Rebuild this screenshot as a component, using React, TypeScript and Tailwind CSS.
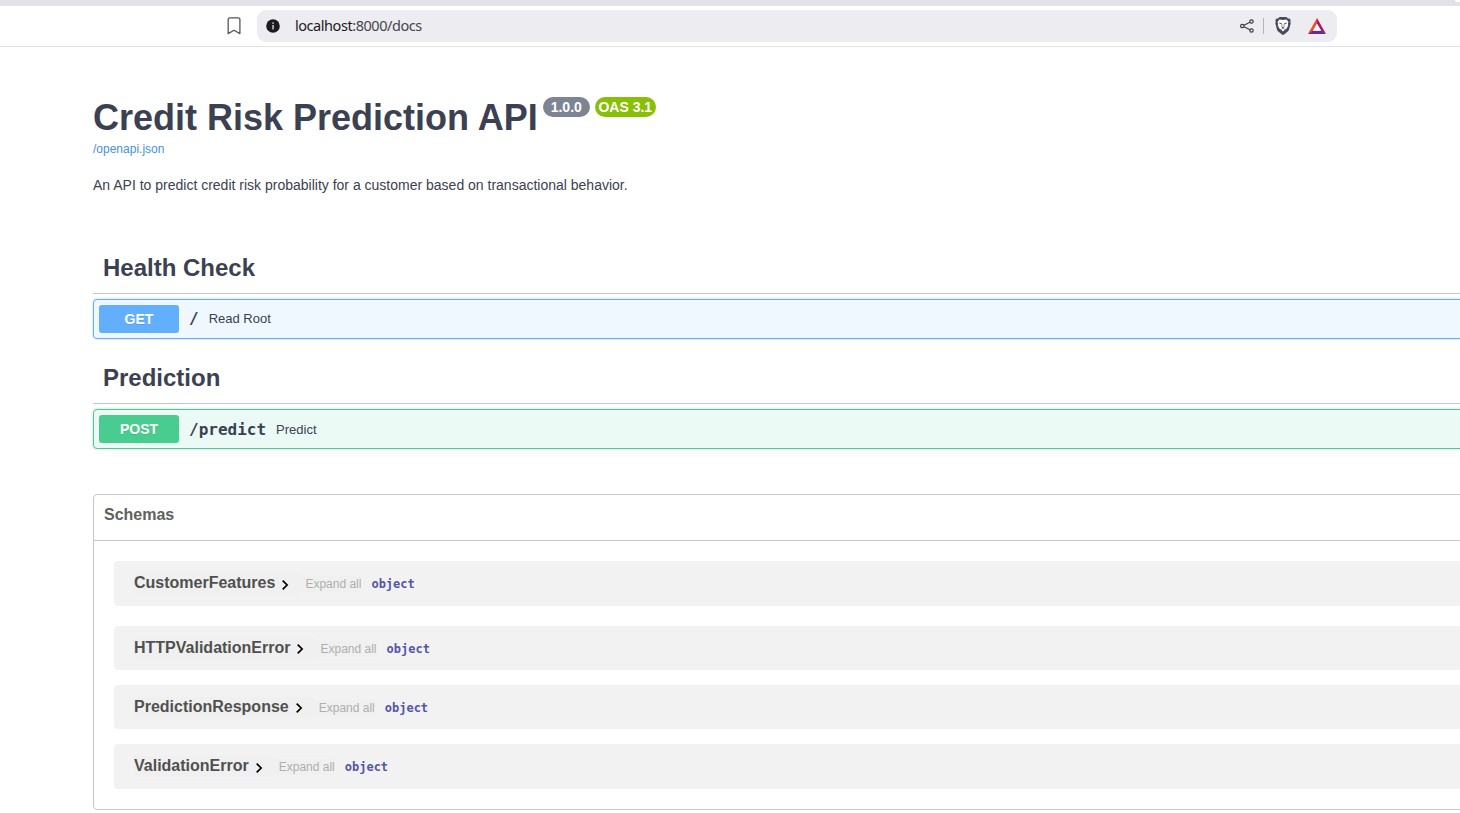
const schemas = [
  { name: "CustomerFeatures", row: "h-[45px] mb-[20px]", arrow: "top-[2px]" },
  { name: "HTTPValidationError", row: "h-[44px] mb-[15px]", arrow: "top-px" },
  { name: "PredictionResponse", row: "h-[44px] mb-[15px]", arrow: "top-px" },
  { name: "ValidationError", row: "h-[45px]", arrow: "top-[2px]" },
];

function BrowserBar() {
  return (
    <header className="border-b border-[#e3e2e6]">
      <div className="flex h-[6px] justify-end bg-[#e3e2e8]">
        <div className="h-[2px] w-[5px] rounded-bl-full bg-white" />
      </div>
      <div className="flex h-[40px] items-center pl-[227px]">
        <svg className="mr-[16px] h-[18px] w-[14px]" viewBox="0 0 14 18" fill="none" stroke="#56565e" strokeWidth="1.3" strokeLinejoin="round">
          <path d="M1.200 2.500A1.700 1.700 0 0 1 2.900.8h8.300a1.700 1.700 0 0 1 1.700 1.700V16.600L7 13.200 1.200 16.600Z" />
        </svg>
        <div className="flex h-[32px] w-[1080px] items-center rounded-[9px] bg-[#edecf1] pl-[9px]">
          <svg className="h-[14px] w-[14px]" viewBox="0 0 14 14">
            <circle cx="7" cy="7" r="6.8" fill="#1c1c20" />
            <rect x="6.3" y="3.4" width="1.5" height="1.5" fill="#cfcfd4" />
            <rect x="6.3" y="6" width="1.5" height="4.4" fill="#cfcfd4" />
          </svg>
          <div className="ml-[15px] pb-[2px] font-['Noto_Sans',sans-serif] text-[14.5px] leading-[20px] tracking-[-0.45px] text-[#1b1b1f]">
            localhost<span className="text-[#45454b]">:8000/docs</span>
          </div>
          <div className="ml-auto flex items-center pr-[11px]">
            <svg className="h-[14px] w-[14px]" viewBox="0 0 14 14" fill="none" stroke="#3f3f46" strokeWidth="1.200">
              <circle cx="2.300" cy="7" r="1.700" />
              <circle cx="11.500" cy="2.500" r="1.700" />
              <circle cx="11.500" cy="11.500" r="1.700" />
              <path d="M4 6.200 9.900 3.200M4 7.800l5.900 3" />
            </svg>
            <div className="ml-[9px] h-[16px] w-px bg-[#b4b4ba]" />
            <svg className="ml-[11px] h-[18px] w-[16px]" viewBox="0 0 16 18">
              <path fill="#474a5c" d="M4.600 0h6.800L13 1.600l1.500-.1 1.300 1.800-.6 1.300.5 1.600-1.500 5.800c-.4 1.500-1 2.300-2.100 3.100l-3 2.300c-.8.6-1.400.6-2.200 0l-3-2.300C2.800 14.300 2.200 13.500 1.800 12L.3 6.200.8 4.600.2 3.300l1.300-1.800L3 1.600Z" />
              <path fill="#fff" d="M4.500 2.600 8 3.100l3.500-.5 2 2.300-.6 1.700.3 1.800-1.600 3-1.400 1L8 14.400l-2.200-2-1.400-1-1.600-3 .3-1.800-.6-1.700Z" />
              <path fill="#474a5c" d="m4 5.500 2.900.7-.3.900-1.900-.4ZM12 5.500l-2.900.7.3.9 1.900-.4ZM6.400 9.300 8 10.200l1.600-.9L9.200 10.500 8 11.300l-1.200-.8Z" />
              <path fill="none" stroke="#474a5c" strokeWidth=".6" d="M6.900 7v2.500M9.100 7v2.500M6.200 12.400 8 11.300l1.800 1.100" />
            </svg>
            <svg className="ml-[17px] h-[17px] w-[18px]" viewBox="0 0 18 17">
              <path fill="#ff4724" d="M9 0v5.700L4.700 13 0 15.900Z" />
              <path fill="#9e1f63" d="M9 0 18 15.900 13.300 13 9 5.700Z" />
              <path fill="#662d91" d="M0 15.900 4.700 12.600h8.600l4.700 3.300Z" />
              <path fill="#ff4724" d="M0 15.900 3.200 11l1.500 1.600Z" />
              <path fill="#fff" d="m9 5.800 4.100 6.900H4.900Z" />
            </svg>
          </div>
        </div>
      </div>
    </header>
  );
}

type OperationProps = {
  method: string;
  path: string;
  summary: string;
  frame: string;
  badge: string;
  text?: string;
};

function Operation({ method, path, summary, frame, badge, text = "" }: OperationProps) {
  return (
    <div className={`flex h-[40px] items-center rounded-[4px] border p-[4px] pl-[5px] shadow-[0_0_3px_rgba(0,0,0,0.19)] ${frame}`}>
      <div className={`h-[28px] w-[80px] rounded-[3px] text-center text-[14px] leading-[28px] font-bold text-white [text-shadow:0_1px_0_rgba(0,0,0,0.1)] ${badge}`}>
        {method}
      </div>
      <div className={`flex items-center ${text}`}>
        <div className="px-[10px] font-['DejaVu_Sans_Mono',monospace] text-[16px] leading-[20px] font-bold">{path}</div>
        <div className="text-[13px] leading-[20px]">{summary}</div>
      </div>
    </div>
  );
}

function TagHeading({ children }: { children: string }) {
  return (
    <h2 className="h-[51px] border-b border-[#c4c6ca] pt-[10px] pl-[10px] text-[24px] leading-[30px] font-bold">
      {children}
    </h2>
  );
}

export default function App() {
  return (
    <div className="h-[813px] w-full overflow-hidden bg-white font-['Liberation_Sans',Arial,sans-serif] text-[#3b4151]">
      <BrowserBar />
      <main className="ml-[93px] w-[1400px] pt-[49px]">
        <div className="flex items-start">
          <h1 className="pt-px text-[36px] leading-[42px] font-bold">Credit Risk Prediction API</h1>
          <span className="mt-px ml-[5px] h-[20px] w-[47px] rounded-full bg-[#7d8492] text-center text-[14px] leading-[20px] font-bold text-white">1.0.0</span>
          <span className="mt-px ml-[5px] h-[20px] w-[61px] rounded-full bg-[#89bf04] text-center text-[14px] leading-[20px] font-bold text-white">OAS 3.1</span>
        </div>
        <div className="mt-[2px] text-[12px] leading-[16px] text-[#4990e2]">/openapi.json</div>
        <p className="mt-[18px] text-[14px] leading-[20px]">
          An API to predict credit risk probability for a customer based on transactional behavior.
        </p>

        <section className="mt-[48px]">
          <TagHeading>Health Check</TagHeading>
          <div className="pt-[5px]">
            <Operation method="GET" path="/" summary="Read Root" frame="border-[#61affe] bg-[#eff7ff]" badge="bg-[#61affe]" />
          </div>
        </section>
        <section className="mt-[14px]">
          <TagHeading>Prediction</TagHeading>
          <div className="pt-[5px]">
            <Operation method="POST" path="/predict" summary="Predict" frame="border-[#49cc90] bg-[#ebfaf4]" badge="bg-[#49cc90]" text="pt-[2px]" />
          </div>
        </section>

        <section className="mt-[45px] h-[316px] rounded-[4px] border border-[#c4c6ca]">
          <h3 className="h-[46px] border-b border-[#c4c6ca] pt-[10px] pl-[10px] text-[16px] leading-[20px] font-bold text-[#606060]">Schemas</h3>
          <div className="pt-[20px] pl-[20px]">
            {schemas.map((s) => (
              <div key={s.name} className={`flex items-start rounded-[4px] bg-[#f2f2f2] pt-[12px] pl-[20px] ${s.row}`}>
                <div className="flex h-[21px] items-start bg-[#f0f0f0]">
                  <span className="text-[16px] leading-[20px] font-bold text-[#505050]">{s.name}</span>
                  <svg className={`relative mt-[4px] mr-[11px] ml-[6px] h-[12px] w-[8px] ${s.arrow}`} viewBox="0 0 8 12" fill="none" stroke="#000" strokeWidth="1.700">
                    <path d="m1.700 1.600 4.400 4.400-4.400 4.400" />
                  </svg>
                </div>
                <span className="mt-[3px] bg-[#f0f0f0] pl-[5px] text-[12px] leading-[16px] text-[#afaeae]">Expand all</span>
                <span className="mt-[3px] ml-[10px] font-['DejaVu_Sans_Mono',monospace] text-[12px] leading-[16px] font-bold text-[#5555aa]">object</span>
              </div>
            ))}
          </div>
        </section>
      </main>
    </div>
  );
}
